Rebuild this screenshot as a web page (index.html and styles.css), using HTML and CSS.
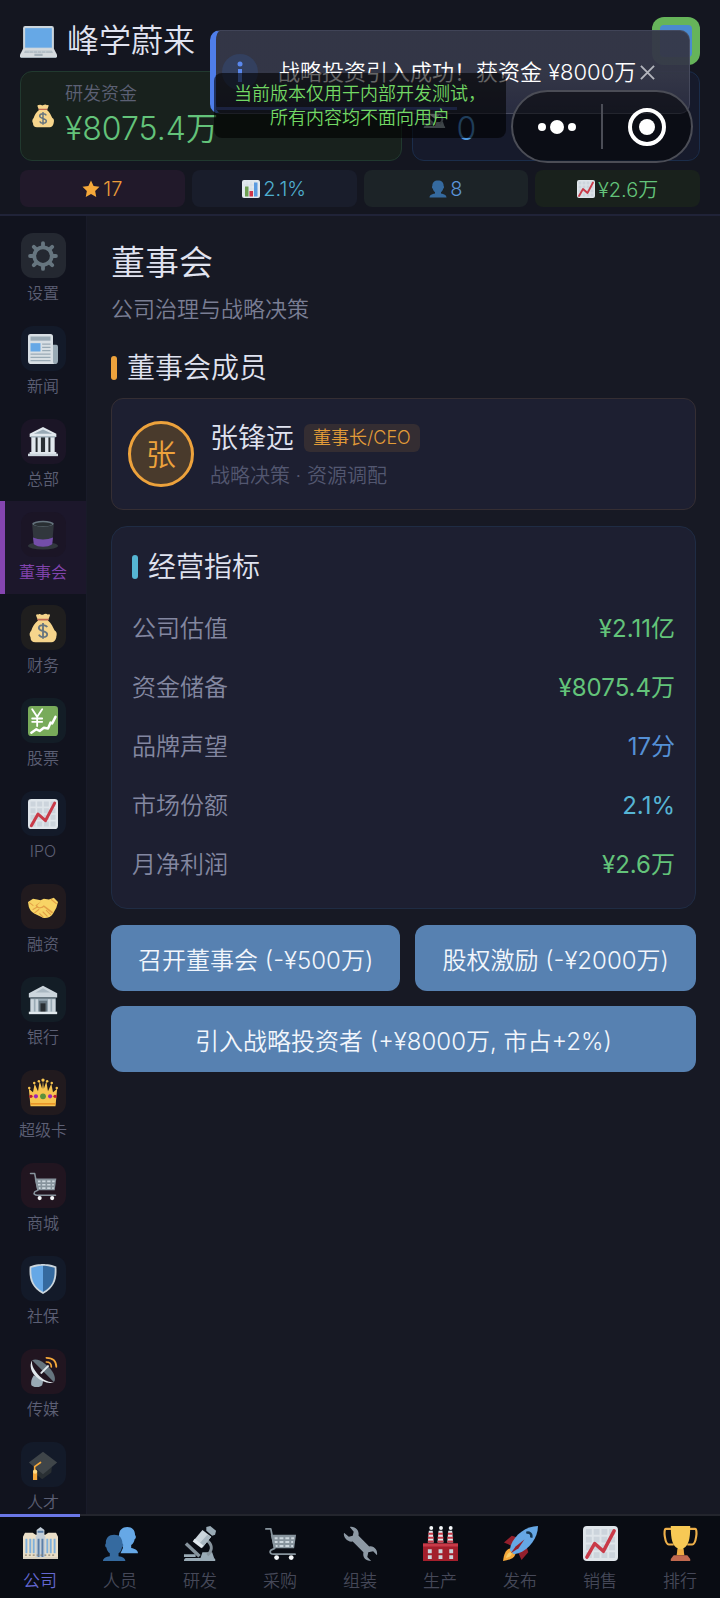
FILE: index.html
```html
<!DOCTYPE html>
<html lang="zh-CN">
<head>
    <meta charset="UTF-8">
    <meta name="viewport" content="width=device-width, initial-scale=1.0">
    <title>峰学蔚来</title>
    <link rel="stylesheet" href="styles.css">
</head>
<body>
    <svg class="sprite" aria-hidden="true">
        <symbol id="laptop" viewBox="0 0 36 36">
            <path fill="#ccd6dd" d="M5 3h26a2 2 0 0 1 2 2v21H3V5a2 2 0 0 1 2-2z"/>
            <path fill="#66a8e6" d="M5 5h26v19H5z"/>
            <path fill="#d5dade" d="M3 25h30l3 6v2H0v-2z"/>
            <path fill="#a3afb8" d="M5 27h26l1 2H4zM14 30h8v2h-8zM0 33h36l-1 1H1z"/>
            <path stroke="#ccd6dd" stroke-width=".6" d="M5 28h26M9 27v2M13 27v2M17 27v2M21 27v2M25 27v2"/>
        </symbol>
        <symbol id="bag" viewBox="0 0 36 36">
            <path fill="#f6d58c" d="M12 2c2-2 4 1 6 0s4-2 6 0c2-1 3 0 2 2l-2 5c4 3 6 8 8 12 4 2 2 7 2 8-1 4-3 6-6 6H9c-4 0-6-2-6-6-2-3-1-6 1-8 1-4 4-9 8-12l-2-5c-1-2 1-3 2-2z"/>
            <path fill="#bf6952" d="M11 7h14l-1 2H12z"/>
            <path fill="none" stroke="#67757f" stroke-width="2.200" d="M23 17c-1-2-3-2.500-5-2.500-3 0-5 1-5 3.500 0 4.500 10 3 10 7.500 0 2.500-2.500 3.500-5 3.500s-4-1-5-3M18 12v19"/>
        </symbol>
        <symbol id="star" viewBox="0 0 36 36">
            <path fill="#f5a83a" d="M18 1l5.200 11.200L35 13.700l-8.700 8.300L28.500 34 18 28.200 7.500 34l2.200-12L1 13.700l11.800-1.500z"/>
        </symbol>
        <symbol id="bars" viewBox="0 0 36 36">
            <rect width="36" height="36" rx="4" fill="#e1e8ed"/>
            <path stroke="#ccd6dd" d="M4 10h28M4 18h28M4 26h28M10 3v30M18 3v30M26 3v30"/>
            <path fill="#6d9f52" d="M6 13h7v20H6z"/>
            <path fill="#cf3448" d="M15 22h7v11h-7z"/>
            <path fill="#5a9be0" d="M24 5h7v28h-7z"/>
        </symbol>
        <symbol id="bust" viewBox="0 0 36 36">
            <path fill="#356a9f" d="M24 26.800v-2.600c2.400-1.700 4-4.300 4.500-7.200 1.500.3 2.200-4 .8-5C29.500 5 25.500 1 18 1S6.500 5 6.700 12c-1.400 1-.7 5.300.8 5 .5 2.900 2.100 5.500 4.500 7.200v2.600C6 28 1 30 1 35h34c0-5-5-7-11-8.200z"/>
        </symbol>
        <symbol id="busts" viewBox="0 0 36 36">
            <path fill="#66a8e6" d="M29 22.500v-3c2-1.500 3.200-3.500 3.500-6 1.500 0 1.800-3.500.5-4C33 4 30 1 25 1s-8.500 3-8.500 8.500c-1 .5-1 4 .5 4 .3 2.500 1.500 4.500 3.500 6v3L18 28h18c0-3-3-5-7-5.500z"/>
            <path fill="#356a9f" d="M16 31v-3c2-1.500 3.200-3.500 3.500-6 1.500 0 1.800-3.500.5-4C20 12.500 17 9 11.500 9S2.500 12.500 3 18c-1 .5-1 4 .5 4 .3 2.500 1.500 4.500 3.500 6v3c-4 .5-7 2-7 5h23c0-3-3-4.500-7-5z"/>
        </symbol>
        <symbol id="chart" viewBox="0 0 36 36">
            <rect width="36" height="36" rx="4" fill="#dfe5ea"/>
            <path fill="#ccd4dc" d="M3 3h6v6H3zM11 3h6v6h-6zM19 3h6v6h-6zM27 3h6v6h-6zM3 11h6v6H3zM11 11h6v6h-6zM19 11h6v6h-6zM27 11h6v6h-6zM3 19h6v6H3zM11 19h6v6h-6zM19 19h6v6h-6zM27 19h6v6h-6zM3 27h6v6H3zM11 27h6v6h-6zM19 27h6v6h-6zM27 27h6v6h-6z"/>
            <path fill="none" stroke="#c93a48" stroke-width="3.600" stroke-linecap="round" stroke-linejoin="round" d="M4 32l8-14 9 8L32 5"/>
        </symbol>
        <symbol id="gear" viewBox="0 0 36 36">
            <circle cx="18" cy="18" r="10.500" fill="none" stroke="#66757f" stroke-width="4.500"/>
            <path stroke="#66757f" stroke-width="4.600" stroke-linecap="round" d="M18 2.500V6M18 30v3.500M2.500 18H6M30 18h3.500M7 7l2.500 2.500M26.500 26.500L29 29M7 29l2.500-2.500M26.500 9.500L29 7"/>
        </symbol>
        <symbol id="news" viewBox="0 0 36 36">
            <path fill="#99aab5" d="M26 13h8a2 2 0 0 1 2 2v17a4 4 0 0 1-4 4h-6z"/>
            <path fill="#d8dfe4" d="M3 0h24a3 3 0 0 1 3 3v30c0 2 1 3 2 3H4a4 4 0 0 1-4-4V3a3 3 0 0 1 3-3z"/>
            <path fill="#99aab5" d="M3 3h24v5H3z"/>
            <path fill="#66a8e6" d="M3 11h12v10H3z"/>
            <path stroke="#99aab5" stroke-width="1.500" d="M17 12h10M17 16h10M17 20h10M3 24h24M3 28h24M3 32h24"/>
        </symbol>
        <symbol id="temple" viewBox="0 0 36 36">
            <path fill="#66757f" d="M5 12h26v18H5z"/>
            <path fill="#292f33" d="M9 12h18v18H9z"/>
            <path fill="#e1e8ed" d="M18 0L2 8v4h32V8zM4 12h5v18H4zM11.500 12h4v18h-4zM20.500 12h4v18h-4zM27 12h5v18h-5zM2 30h32v3H2z"/>
            <path fill="#ccd6dd" d="M0 32h36v3H0z"/>
            <path fill="#99aab5" d="M18 3L7 8h22zM3 11h30v1.500H3z"/>
        </symbol>
        <symbol id="hat" viewBox="0 0 36 36">
            <ellipse cx="18" cy="31" rx="18" ry="4.500" fill="#31373d"/>
            <path fill="#31373d" d="M5 5h26l-2 24H7z"/>
            <path fill="#744eaa" d="M6 21c7 3 17 3 24 0l-1 8c-5 4-17 4-22 0z"/>
            <ellipse cx="18" cy="4.500" rx="13" ry="3.500" fill="#66757f"/>
            <ellipse cx="18" cy="5.200" rx="11" ry="2.400" fill="#292f33"/>
        </symbol>
        <symbol id="yen" viewBox="0 0 36 36">
            <rect width="36" height="36" rx="4" fill="#78ab5a"/>
            <path fill="none" stroke="#fff" stroke-width="2.200" stroke-linecap="round" d="M5 4l6 9 6-9M11 13v11M5 15h12M5 19h12"/>
            <path fill="none" stroke="#fff" stroke-width="3" stroke-linecap="round" stroke-linejoin="round" d="M4 32l6-4 4 2 5-4 5 1 3-7 2 1 4-8"/>
        </symbol>
        <symbol id="hands" viewBox="0 0 36 36">
            <path fill="#f8d465" d="M0 12l6-4 5 1 4 1 4-2 6 1 6-2 5 5-2 7-4 7c-2 4-8 6-12 5L8 26c-4-2-6-5-7-8z"/>
            <path fill="#e3a047" d="M16 11l-5 5c1 3 5 3 8 0l11 8-1 2-10-8c-4 3-9 2-10-2z"/>
            <path fill="none" stroke="#e3a047" stroke-width="1.300" stroke-linecap="round" d="M22 22l5 5M18 24l5 5M14 26l4 4M6 21l5-3M8 25l5-4M28 9l6 5M2 13l4 3"/>
        </symbol>
        <symbol id="bank" viewBox="0 0 36 36">
            <path fill="#99aab5" d="M3 15h30v18H3z"/>
            <path fill="#ccd6dd" d="M18 1L1 10v5h34v-5zM3 17h4v15H3zM9 17h3v15H9zM24 17h3v15h-3zM29 17h4v15h-4z"/>
            <path fill="#66757f" d="M3 14.500h30v2H3zM13 19h10v14H13z"/>
            <path fill="#292f33" d="M15 22h6v11h-6z"/>
            <path fill="#aab8c2" d="M18 4L9 9h18z"/>
            <path fill="#e1e8ed" d="M1 32h34v3H1z"/>
        </symbol>
        <symbol id="crown" viewBox="0 0 36 36">
            <path fill="#f7c450" d="M3 34L1 13l5 4 2-10 4 9 2-12 3 9 1-10 1 10 3-9 2 12 4-9 2 10 5-4-2 21z"/>
            <g fill="#f7c450"><circle cx="1.500" cy="12" r="1.500"/><circle cx="7.500" cy="6" r="1.500"/><circle cx="13" cy="4" r="1.500"/><circle cx="18" cy="2.500" r="2"/><circle cx="23" cy="4" r="1.500"/><circle cx="28.500" cy="6" r="1.500"/><circle cx="34.500" cy="12" r="1.500"/></g>
            <path fill="#e8962a" d="M3 30h30v2H3z"/>
            <circle cx="18" cy="22" r="3.500" fill="#5c913b"/>
            <g fill="#9b26b6"><circle cx="9.500" cy="22" r="2.500"/><circle cx="26.500" cy="22" r="2.500"/></g>
            <g fill="#be1931"><circle cx="3.500" cy="22" r="2"/><circle cx="32.500" cy="22" r="2"/></g>
        </symbol>
        <symbol id="cart" viewBox="0 0 36 36">
            <path fill="#87949d" d="M8 9h26l-2 14H11z"/>
            <path stroke="#ccd6dd" stroke-width="2" d="M12 12.500h3M17 12.500h4M23 12.500h4M29 12.500h3M12 16.500h3M17 16.500h4M23 16.500h4M29 16.500h2M13 20.500h2M17 20.500h4M23 20.500h4M29 20.500h2"/>
            <path fill="none" stroke="#87949d" stroke-width="1.800" stroke-linecap="round" stroke-linejoin="round" d="M3 3h5l4 20-4 2c-2 3 1 4 3 4h22"/>
            <g fill="#f5f8fa"><circle cx="14" cy="32.500" r="2.500"/><circle cx="29" cy="32.500" r="2.500"/></g>
        </symbol>
        <symbol id="shield" viewBox="0 0 36 36">
            <path fill="#ccd6dd" d="M34 3c-7-3-16-3-16-3S9 0 2 3C1 17 3 28 18 36 33 28 35 17 34 3z"/>
            <path fill="#66a8e6" d="M18 33.500C6 27 3.500 18 4 4.500 11 2 18 2 18 2z"/>
            <path fill="#356a9f" d="M18 33.500C30 27 32.500 18 32 4.500 25 2 18 2 18 2z"/>
        </symbol>
        <symbol id="dish" viewBox="0 0 36 36">
            <path fill="#99aab5" d="M7 22l11 6c0 4-1 5-1 6-3 3-10 3-13 0-1-5 1-9 3-12z"/>
            <path fill="#66757f" d="M5 4c7-4 19 6 24 13 4 6 4 11 2 13z"/>
            <path fill="#e1e8ed" d="M5 4c-4 6-1 15 5 20 7 6 16 9 21 6-5 1-13-2-19-9S4 9 5 4z"/>
            <path stroke="#e1e8ed" stroke-width="2.400" stroke-linecap="round" d="M16 19l8-8"/>
            <path fill="none" stroke="#f5a83a" stroke-width="2" stroke-linecap="round" d="M22 6c4 0 6 2 6 6M22 1c8 0 12 4 12 11"/>
        </symbol>
        <symbol id="cap" viewBox="0 0 36 36">
            <path fill="#292f33" d="M8 16h21l-1 11-11 8-9-7z"/>
            <path fill="#3f4549" d="M18 2l17 13-17 14L1 15z"/>
            <path fill="none" stroke="#f5a83a" stroke-width="2" stroke-linecap="round" d="M15 15l-7 5v8"/>
            <path fill="#f5a83a" d="M6 25h5v11H6z"/>
            <circle cx="8.500" cy="26" r="2.500" fill="#ffd983"/>
        </symbol>
        <symbol id="office" viewBox="0 0 36 36">
            <path fill="#eadfc8" d="M0 11l2-4h8l3 2h10l3-2h8l2 4v22H0z"/>
            <path fill="#c3ced8" d="M14 10V4l4-3 4 3v6l1 1v22H13V11z"/>
            <path stroke="#7fb0dc" stroke-width="2" d="M3.500 13v15M7.500 13v15M11 13v15M25 13v15M28.500 13v15M32.500 13v15"/>
            <path stroke="#5b7fa8" stroke-width="2" d="M16 13v19M20 13v19M15 6h6"/>
            <path stroke="#8b8578" stroke-width="1.200" stroke-dasharray="2 2" d="M2 30h32"/>
            <path fill="#d9d2c2" d="M0 32h36v2H0z"/>
        </symbol>
        <symbol id="scope" viewBox="0 0 36 36">
            <path fill="#99aab5" d="M3 33h28a2 2 0 0 1 2 3H1c0-2 1-3 2-3zM1 29h12v3H1zM20 27h10l2 6H18z"/>
            <path fill="none" stroke="#87949d" stroke-width="3" d="M25 15c6 5 5 11 0 15"/>
            <path stroke="#87949d" stroke-width="3.500" d="M3 18l14 13"/>
            <path fill="#ccd6dd" d="M20 4l9 7-9 11-9-7z"/>
            <path fill="#aab8c2" d="M25 9l4 2-9 11-4-3z"/>
            <path fill="#e1e8ed" d="M12 13l9 7-2 3-9-7z"/>
            <path fill="#99aab5" d="M24 1l4-1 6 5-1 4-3 1-6-5z"/>
        </symbol>
        <symbol id="wrench" viewBox="0 0 36 36">
            <path fill="#8d99a4" d="M7 1c5-1 10 3 9 9l11 11c5-1 9 4 8 9l-4-4-5 1-1 5 4 4c-6 0-9-4-8-9L10 16c-5 1-10-4-9-9l5 4 4-1 1-4z"/>
        </symbol>
        <symbol id="factory" viewBox="0 0 36 36">
            <path fill="#e1e8ed" d="M5 17L6 5h4l1 12zM15 17l1-12h4l1 12zM25 17l1-12h4l1 12z"/>
            <path stroke="#c93a48" stroke-width="2" d="M5.500 8h5M5 12h6M5 16h6M15.500 8h5M15 12h6M15 16h6M25.500 8h5M25 12h6M25 16h6"/>
            <path fill="#a31f2c" d="M0 18h36v18H0z"/>
            <path fill="#c93a48" d="M0 18h36v3H0z"/>
            <path fill="#ccd6dd" d="M5 24h4v4H5zM16 24h4v4h-4zM27 24h4v4h-4zM5 30h4v4H5zM16 30h4v4h-4zM27 30h4v4h-4z"/>
            <g fill="#f5f8fa"><circle cx="8.500" cy="2" r="2"/><circle cx="18.500" cy="2" r="2"/><circle cx="28.500" cy="2" r="2"/></g>
        </symbol>
        <symbol id="rocket" viewBox="0 0 36 36">
            <path fill="#941f2c" d="M1 17l8-7 7 2-8 8zM19 35l7-8-2-7-8 8z"/>
            <path fill="#f5a83a" d="M9 23c-6 0-8 6-9 13 7-1 13-3 13-9z"/>
            <path fill="#f8cf6a" d="M8 27c-3 0-4 3-5 6 3-1 6-2 6-5z"/>
            <path fill="#66a8e6" d="M36 0C24 0 12 9 8 20l-1 5 4 4 5-1C27 24 36 12 36 0z"/>
            <path fill="#941f2c" d="M8 28l5-7 9-7-6 9z"/>
            <path fill="none" stroke="#15354f" stroke-width="2.500" d="M24 7c3-1 6 1 5 5"/>
        </symbol>
        <symbol id="trophy" viewBox="0 0 36 36">
            <path fill="none" stroke="#eeb04a" stroke-width="2.200" d="M9 3H3c-3 0-1 16 3 16h5M27 3h6c3 0 1 16-3 16h-5"/>
            <path fill="#f7c955" d="M8 0h20c0 15-2 20-7 23v6h-6v-6C10 20 8 15 8 0z"/>
            <path fill="#eeab42" d="M15 24h6l1 6h-8z"/>
            <path fill="#c1694f" d="M11 30h14l3 4v2H8v-2z"/>
        </symbol>
    </svg>

    <header class="header">
        <div class="brand-row">
            <h1 class="brand"><svg class="brand-icon"><use href="#laptop"/></svg>峰学蔚来</h1>
            <div class="avatar-box"><div class="avatar-inner"></div></div>
        </div>
        <div class="stats">
            <div class="stat stat-funds">
                <svg class="stat-icon"><use href="#bag"/></svg>
                <div>
                    <div class="stat-label">研发资金</div>
                    <div class="stat-value">¥8075.4万</div>
                </div>
            </div>
            <div class="stat stat-tech">
                <svg class="stat-icon"><use href="#scope"/></svg>
                <div>
                    <div class="stat-label"></div>
                    <div class="stat-value">0</div>
                </div>
            </div>
        </div>
        <div class="chips">
            <div class="chip chip-orange"><svg class="chip-icon"><use href="#star"/></svg>17</div>
            <div class="chip chip-cyan"><svg class="chip-icon"><use href="#bars"/></svg>2.1%</div>
            <div class="chip chip-blue"><svg class="chip-icon"><use href="#bust"/></svg>8</div>
            <div class="chip chip-green"><svg class="chip-icon"><use href="#chart"/></svg>¥2.6万</div>
        </div>
    </header>

    <div class="body">
        <nav class="sidebar">
            <a class="side-item" href="#"><span class="side-icon grey"><svg><use href="#gear"/></svg></span>设置</a>
            <a class="side-item" href="#"><span class="side-icon blue"><svg><use href="#news"/></svg></span>新闻</a>
            <a class="side-item" href="#"><span class="side-icon purple"><svg><use href="#temple"/></svg></span>总部</a>
            <a class="side-item active" href="#"><span class="side-icon purple"><svg><use href="#hat"/></svg></span>董事会</a>
            <a class="side-item" href="#"><span class="side-icon gold"><svg><use href="#bag"/></svg></span>财务</a>
            <a class="side-item" href="#"><span class="side-icon teal"><svg><use href="#yen"/></svg></span>股票</a>
            <a class="side-item" href="#"><span class="side-icon blue"><svg><use href="#chart"/></svg></span>IPO</a>
            <a class="side-item" href="#"><span class="side-icon orange"><svg><use href="#hands"/></svg></span>融资</a>
            <a class="side-item" href="#"><span class="side-icon teal"><svg><use href="#bank"/></svg></span>银行</a>
            <a class="side-item" href="#"><span class="side-icon orange"><svg><use href="#crown"/></svg></span>超级卡</a>
            <a class="side-item" href="#"><span class="side-icon red"><svg><use href="#cart"/></svg></span>商城</a>
            <a class="side-item" href="#"><span class="side-icon blue"><svg><use href="#shield"/></svg></span>社保</a>
            <a class="side-item" href="#"><span class="side-icon red"><svg><use href="#dish"/></svg></span>传媒</a>
            <a class="side-item" href="#"><span class="side-icon blue"><svg><use href="#cap"/></svg></span>人才</a>
        </nav>

        <main class="main">
            <h2 class="page-title">董事会</h2>
            <p class="page-sub">公司治理与战略决策</p>

            <h3 class="section-title orange">董事会成员</h3>
            <div class="member">
                <div class="member-avatar">张</div>
                <div>
                    <div class="member-name">张锋远<span class="badge">董事长/CEO</span></div>
                    <div class="member-desc">战略决策 · 资源调配</div>
                </div>
            </div>

            <section class="metrics">
                <h3 class="section-title cyan">经营指标</h3>
                <dl>
                    <div class="metric"><dt>公司估值</dt><dd class="green">¥2.11亿</dd></div>
                    <div class="metric"><dt>资金储备</dt><dd class="green">¥8075.4万</dd></div>
                    <div class="metric"><dt>品牌声望</dt><dd class="blue">17分</dd></div>
                    <div class="metric"><dt>市场份额</dt><dd class="cyan">2.1%</dd></div>
                    <div class="metric"><dt>月净利润</dt><dd class="green">¥2.6万</dd></div>
                </dl>
            </section>

            <div class="actions">
                <button class="btn" type="button">召开董事会 (-¥500万)</button>
                <button class="btn" type="button">股权激励 (-¥2000万)</button>
                <button class="btn" type="button">引入战略投资者 (+¥8000万, 市占+2%)</button>
            </div>
        </main>
    </div>

    <nav class="tabbar">
        <a class="tab active" href="#"><svg><use href="#office"/></svg>公司</a>
        <a class="tab" href="#"><svg><use href="#busts"/></svg>人员</a>
        <a class="tab" href="#"><svg><use href="#scope"/></svg>研发</a>
        <a class="tab" href="#"><svg><use href="#cart"/></svg>采购</a>
        <a class="tab" href="#"><svg><use href="#wrench"/></svg>组装</a>
        <a class="tab" href="#"><svg><use href="#factory"/></svg>生产</a>
        <a class="tab" href="#"><svg><use href="#rocket"/></svg>发布</a>
        <a class="tab" href="#"><svg><use href="#chart"/></svg>销售</a>
        <a class="tab" href="#"><svg><use href="#trophy"/></svg>排行</a>
    </nav>

    <div class="toast" role="status">
        <span class="toast-icon"><svg viewBox="0 0 36 36"><circle cx="18" cy="10" r="2.500"/><path d="M16 15h4v13h-4z"/></svg></span>
        <span class="toast-text">战略投资引入成功！获资金 ¥8000万</span>
        <button class="toast-close" type="button" aria-label="关闭"><svg viewBox="0 0 16 16"><path d="M1 1l14 14M15 1L1 15"/></svg></button>
        <div class="toast-progress"></div>
    </div>

    <div class="notice">当前版本仅用于内部开发测试，<br>所有内容均不面向用户</div>

    <div class="capsule">
        <button type="button" aria-label="更多"><svg width="40" height="16" viewBox="0 0 40 16"><circle cx="5" cy="8" r="4"/><circle cx="20" cy="8" r="7"/><circle cx="35" cy="8" r="4"/></svg></button>
        <button type="button" aria-label="退出"><svg width="38" height="38" viewBox="0 0 38 38"><circle class="ring" cx="19" cy="19" r="17"/><circle cx="19" cy="19" r="8"/></svg></button>
    </div>
</body>
</html>
```
FILE: styles.css
```css
* {
    box-sizing: border-box;
    margin: 0;
    padding: 0;
}
body {
    position: relative;
    display: flex;
    flex-direction: column;
    height: 100vh;
    overflow: hidden;
    background-color: #171924;
    color: #e0e3f0;
    font-family: Inter, "Noto Sans CJK SC", sans-serif;
    font-weight: 350;
}
a {
    color: inherit;
    text-decoration: none;
}
h1, h2, h3 {
    font-weight: 350;
}
button {
    border: none;
    background: none;
    font: inherit;
    color: inherit;
    cursor: pointer;
}
svg {
    display: block;
}
.sprite {
    position: absolute;
    width: 0;
    height: 0;
}

/* header */
.header {
    padding: 17px 20px 7px;
    background-color: #141620;
    border-bottom: 2px solid #202338;
}
.brand-row {
    display: flex;
    justify-content: space-between;
    align-items: center;
    height: 48px;
    margin-bottom: 6px;
}
.brand {
    display: flex;
    align-items: center;
    gap: 10px;
    font-size: 32px;
    line-height: 48px;
}
.brand-icon {
    width: 37px;
    height: 37px;
}
.avatar-box {
    width: 48px;
    height: 48px;
    padding: 8px;
    border-radius: 12px;
    background-color: #66b45a;
}
.avatar-inner {
    height: 100%;
    border-radius: 4px;
    background-color: #4a8ad0;
}
.stats {
    display: flex;
    gap: 10px;
    margin-bottom: 9px;
}
.stat {
    display: flex;
    align-items: center;
    gap: 10px;
    height: 90px;
    padding: 0 10px;
    border: 1px solid;
    border-radius: 12px;
}
.stat-funds {
    flex: 27;
    background-color: #18211d;
    border-color: #21392f;
    color: #63c37a;
}
.stat-tech {
    flex: 20;
    background-color: #161a2b;
    border-color: #1b2d4a;
    color: #4f9ae0;
}
.stat-icon {
    width: 24px;
    height: 26px;
}
.stat-label {
    height: 26px;
    font-size: 18px;
    line-height: 26px;
    color: #5c6074;
}
.stat-value {
    font-size: 32px;
    line-height: 44px;
}
.chips {
    display: grid;
    grid-template-columns: repeat(4, 1fr);
    gap: 7px;
}
.chip {
    display: flex;
    justify-content: center;
    align-items: center;
    gap: 3px;
    height: 37px;
    border-radius: 8px;
    font-size: 20px;
}
.chip-icon {
    width: 18px;
    height: 18px;
}
.chip-orange {
    background-color: #21192a;
    color: #ec9c3a;
}
.chip-cyan {
    background-color: #191d2b;
    color: #4fafd0;
}
.chip-blue {
    background-color: #1c2327;
    color: #5b94d8;
}
.chip-green {
    background-color: #19211c;
    color: #63c37a;
}

/* sidebar */
.body {
    display: flex;
    flex: 1;
    min-height: 0;
}
.sidebar {
    flex: none;
    width: 87px;
    padding-top: 6px;
    overflow: hidden;
    background-color: #11131e;
    border-right: 1px solid #191b29;
}
.side-item {
    display: flex;
    flex-direction: column;
    align-items: center;
    gap: 4px;
    height: 93px;
    padding-top: 11px;
    font-size: 16px;
    line-height: 22px;
    color: #5c5f74;
}
.side-item.active {
    background-color: #1c172b;
    box-shadow: inset 5px 0 #8545b0;
    color: #8244ae;
}
.side-icon {
    display: flex;
    justify-content: center;
    align-items: center;
    width: 45px;
    height: 45px;
    border-radius: 12px;
}
.side-icon svg {
    width: 30px;
    height: 30px;
}
.side-icon.grey { background-color: #242831; }
.side-icon.blue { background-color: #131a29; }
.side-icon.purple { background-color: #1b1526; }
.side-icon.gold { background-color: #1f1e1e; }
.side-icon.teal { background-color: #131d26; }
.side-icon.orange { background-color: #211a1e; }
.side-icon.red { background-color: #211520; }

/* content */
.main {
    flex: 1;
    padding: 24px;
}
.page-title {
    font-size: 34px;
    line-height: 46px;
}
.page-sub {
    margin: 8px 0 24px;
    font-size: 22px;
    line-height: 30px;
    color: #7a7e94;
}
.section-title {
    display: flex;
    align-items: center;
    gap: 10px;
    font-size: 28px;
    line-height: 40px;
}
.section-title::before {
    content: "";
    width: 6px;
    height: 24px;
    border-radius: 3px;
}
.section-title.orange::before {
    background-color: #eda23c;
}
.section-title.cyan::before {
    background-color: #55b5d2;
}
.member {
    display: flex;
    align-items: center;
    gap: 16px;
    margin: 10px 0 16px;
    padding: 19px 16px;
    background-color: #1d1f31;
    border: 1px solid #352e33;
    border-radius: 12px;
}
.member-avatar {
    width: 66px;
    height: 66px;
    border: 3px solid #eda23c;
    border-radius: 50%;
    background-color: #493a2c;
    color: #eda23c;
    font-size: 30px;
    line-height: 60px;
    text-align: center;
}
.member-name {
    display: flex;
    align-items: center;
    gap: 10px;
    font-size: 28px;
    line-height: 40px;
}
.badge {
    padding: 0 9px;
    border-radius: 6px;
    background-color: #342d32;
    color: #e39c38;
    font-size: 18px;
    line-height: 28px;
}
.member-desc {
    margin-top: 4px;
    font-size: 20px;
    line-height: 28px;
    color: #535770;
}
.metrics {
    margin-bottom: 16px;
    padding: 20px 20px 14px;
    background-color: #1d1f31;
    border: 1px solid #1f2c44;
    border-radius: 16px;
}
.metrics dl {
    margin-top: 12px;
}
.metric {
    display: flex;
    justify-content: space-between;
    font-size: 24px;
    line-height: 59px;
}
.metric dt {
    color: #8387a0;
}
.metric dd {
    font-weight: 400;
}
.metric .green { color: #63c37a; }
.metric .blue { color: #5590d6; }
.metric .cyan { color: #56b4d4; }
.actions {
    display: flex;
    flex-wrap: wrap;
    gap: 15px;
}
.btn {
    flex: 1 1 auto;
    height: 66px;
    padding: 0 20px;
    border-radius: 12px;
    background-color: #5781b1;
    color: #f2f6fc;
    font-size: 24px;
}

/* bottom tabs */
.tabbar {
    display: flex;
    flex: none;
    height: 84px;
    background-color: #090c13;
    box-shadow: inset 0 2px #23252d;
}
.tab {
    display: flex;
    flex: 1;
    flex-direction: column;
    align-items: center;
    gap: 8px;
    padding-top: 12px;
    font-size: 17px;
    line-height: 24px;
    color: #454858;
}
.tab svg {
    width: 35px;
    height: 35px;
}
.tab.active {
    box-shadow: inset 0 3px #6a77e6;
    color: #6468d0;
}

/* overlays */
.toast {
    position: absolute;
    top: 30px;
    left: 210px;
    right: 30px;
    display: flex;
    align-items: center;
    height: 84px;
    padding-left: 6px;
    border: 1px solid rgba(120, 124, 145, 0.3);
    border-left: 6px solid #4f7eea;
    border-radius: 10px;
    background: linear-gradient(rgba(53, 56, 72, 0.96) 50%, rgba(43, 46, 66, 0.92));
    color: #fff;
}
.toast-icon {
    width: 36px;
    height: 36px;
    margin-right: 20px;
    border-radius: 50%;
    background-color: #33405f;
}
.toast-icon svg {
    fill: #5a88ee;
}
.toast-text {
    font-size: 22px;
    line-height: 32px;
    white-space: nowrap;
}
.toast-close {
    padding: 4px;
}
.toast-close svg {
    width: 15px;
    height: 15px;
    fill: none;
    stroke: #b3b5bd;
    stroke-width: 2;
}
.toast-progress {
    position: absolute;
    left: 0;
    bottom: 3px;
    width: 51%;
    height: 3px;
    background-color: #44559e;
}
.notice {
    position: absolute;
    top: 73px;
    left: 50%;
    width: 292px;
    margin-left: -146px;
    padding: 9px 0 8px;
    border-radius: 8px;
    background-color: rgba(0, 0, 0, 0.6);
    color: #72d864;
    font-size: 18px;
    line-height: 24px;
    text-align: center;
}
.capsule {
    position: absolute;
    top: 90px;
    right: 27px;
    display: flex;
    align-items: center;
    width: 182px;
    height: 73px;
    border: 2px solid #4b4d56;
    border-radius: 37px;
    background-color: rgba(0, 0, 0, 0.5);
}
.capsule button {
    display: flex;
    flex: 1;
    justify-content: center;
    align-items: center;
    height: 45px;
}
.capsule button + button {
    border-left: 2px solid #4b4d56;
}
.capsule svg {
    fill: #fff;
}
.capsule .ring {
    fill: none;
    stroke: #fff;
    stroke-width: 4;
}
```
